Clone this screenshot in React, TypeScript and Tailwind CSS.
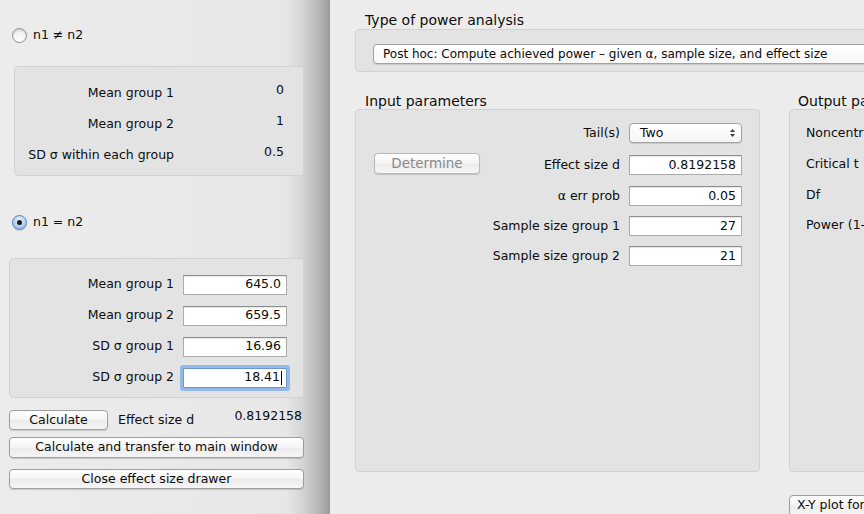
import React from 'react'

function Radio({ checked }: { checked?: boolean }) {
  if (checked) {
    return (
      <div className="w-[15px] h-[15px] rounded-full border border-[#5d82b4] bg-[radial-gradient(circle_at_50%_35%,#eef5fd_0%,#a9cbf0_60%,#77a7e0_100%)] shadow-[0_1px_1px_rgba(0,0,0,0.15)] flex items-center justify-center shrink-0">
        <div className="w-[5px] h-[5px] rounded-full bg-[#1c1c1c]" />
      </div>
    )
  }
  return (
    <div className="w-[15px] h-[15px] rounded-full border border-[#8e8e8e] bg-[linear-gradient(#ededed,#ffffff)] shadow-[inset_0_1px_2px_rgba(0,0,0,0.18)] shrink-0" />
  )
}

function Field({ value, focused }: { value: string; focused?: boolean }) {
  if (focused) {
    return (
      <div className="h-[20px] w-full bg-white border border-[#6d97cb] rounded-[1px] ring-[3px] ring-[#93b9e8] flex items-center justify-end pr-[4px]">
        <span>{value}</span>
        <span className="w-px h-[14px] bg-black ml-px" />
      </div>
    )
  }
  return (
    <div className="h-[20px] w-full bg-white border border-[#ababab] border-t-[#8d8d8d] shadow-[inset_0_1px_1px_rgba(0,0,0,0.1)] flex items-center justify-end pr-[5px]">
      {value}
    </div>
  )
}

function Button({ children, className, disabled }: { children: React.ReactNode; className?: string; disabled?: boolean }) {
  return (
    <div
      className={`rounded-[4px] border border-[#9e9e9e] bg-[linear-gradient(#ffffff,#f4f4f4_50%,#ebebeb_51%,#f6f6f6)] shadow-[0_1px_1px_rgba(0,0,0,0.15)] flex items-center justify-center shrink-0 ${disabled ? 'text-[#8a8a8a] border-[#b9b9b9]' : ''} ${className ?? ''}`}
    >
      {children}
    </div>
  )
}

function UpDown() {
  return (
    <svg width="7" height="10" viewBox="0 0 7 10" className="shrink-0">
      <path d="M3.5 1 L6 4 L1 4 Z" fill="#3a3a3a" />
      <path d="M3.5 9 L6 6 L1 6 Z" fill="#3a3a3a" />
    </svg>
  )
}

const sizeRows = [
  { label: 'Mean group 1', value: '645.0' },
  { label: 'Mean group 2', value: '659.5' },
  { label: 'SD σ group 1', value: '16.96' },
  { label: 'SD σ group 2', value: '18.41', focused: true },
]

const inputRows = [
  { label: 'Effect size d', value: '0.8192158', mt: 'mt-[12px]' },
  { label: 'α err prob', value: '0.05', mt: 'mt-[11px]' },
  { label: 'Sample size group 1', value: '27', mt: 'mt-[10px]' },
  { label: 'Sample size group 2', value: '21', mt: 'mt-[10px]' },
]

export default function App() {
  return (
    <div className="w-[864px] h-[514px] overflow-hidden flex bg-[#ececec] text-[#0c0c0c] font-['DejaVu_Sans',sans-serif] text-[12.5px] leading-none">
      {/* effect size drawer */}
      <div className="w-[330px] shrink-0 h-full flex flex-col bg-[linear-gradient(to_right,#ececec_0px,#e7e7e7_286px,#d4d4d4_303px,#b4b4b4_320px,#999999_330px)]">
        <div className="mt-[28px] ml-[12px] flex items-center gap-[6px] h-[15px]">
          <Radio />
          <span>n1 ≠ n2</span>
        </div>

        <div className="mt-[23px] ml-[14px] w-[290px] h-[110px] rounded-[4px] border border-[#d2d2d2] bg-[#e3e3e3] pt-[11px]">
          {[
            ['Mean group 1', '0'],
            ['Mean group 2', '1'],
            ['SD σ within each group', '0.5'],
          ].map(([label, value]) => (
            <div key={label} className="h-[31px] flex items-center">
              <div className="w-[159px] text-right whitespace-nowrap">{label}</div>
              <div className="w-[110px] text-right relative -top-[3px]">{value}</div>
            </div>
          ))}
        </div>

        <div className="mt-[39px] ml-[12px] flex items-center gap-[6px] h-[15px]">
          <Radio checked />
          <span>n1 = n2</span>
        </div>

        <div className="mt-[28px] ml-[9px] w-[295px] h-[140px] rounded-[4px] border border-[#d2d2d2] bg-[#e3e3e3] pt-[10px]">
          {sizeRows.map(row => (
            <div key={row.label} className="h-[31px] flex items-center">
              <div className="w-[164px] text-right whitespace-nowrap">{row.label}</div>
              <div className="ml-[9px] w-[104px]">
                <Field value={row.value} focused={row.focused} />
              </div>
            </div>
          ))}
        </div>

        <div className="mt-[12px] flex items-center h-[20px]">
          <Button className="ml-[9px] w-[99px] h-[20px]">Calculate</Button>
          <span className="ml-[10px]">Effect size d</span>
          <span className="flex-1 text-right mr-[28px] relative -top-[4px]">0.8192158</span>
        </div>

        <Button className="mt-[7px] ml-[9px] w-[295px] h-[21px]">Calculate and transfer to main window</Button>
        <Button className="mt-[11px] ml-[9px] w-[295px] h-[20px]">Close effect size drawer</Button>
      </div>

      {/* main window */}
      <div className="flex-1 h-full overflow-hidden flex flex-col">
        <div className="mt-[12px] ml-[35px] h-[16px] leading-[16px] text-[14px] whitespace-nowrap">Type of power analysis</div>
        <div className="mt-[1px] ml-[25px] w-[560px] h-[43px] shrink-0 rounded-[4px] border border-[#d2d2d2] bg-[#e3e3e3] pt-[14px] pl-[17px]">
          <div className="h-[20px] w-[540px] rounded-[4px] border border-[#a2a2a2] bg-[linear-gradient(#ffffff,#f7f7f7)] shadow-[0_1px_1px_rgba(0,0,0,0.12)] flex items-center pl-[9px] text-[12px] whitespace-nowrap">
            Post hoc: Compute achieved power – given α, sample size, and effect size
          </div>
        </div>

        <div className="mt-[21px] flex">
          <div className="ml-[25px] w-[405px] shrink-0 flex flex-col">
            <div className="pl-[10px] h-[16px] leading-[16px] text-[14px] whitespace-nowrap">Input parameters</div>
            <div className="h-[363px] rounded-[4px] border border-[#d2d2d2] bg-[#e3e3e3] pt-[13px]">
              <div className="flex items-center h-[20px]">
                <div className="w-[264px] text-right">Tail(s)</div>
                <div className="ml-[9px] w-[113px] h-[20px] rounded-[4px] border border-[#a2a2a2] bg-[linear-gradient(#ffffff,#f5f5f5)] shadow-[0_1px_1px_rgba(0,0,0,0.12)] flex items-center pl-[10px] pr-[5px]">
                  <span className="flex-1">Two</span>
                  <UpDown />
                </div>
              </div>
              {inputRows.map((row, i) => (
                <div key={row.label} className={`flex items-center h-[20px] ${row.mt}`}>
                  <div className="w-[264px] flex items-center">
                    {i === 0 && (
                      <Button disabled className="ml-[18px] w-[106px] h-[21px] -mt-[3px] text-[13.5px]">Determine</Button>
                    )}
                    <div className="flex-1 text-right whitespace-nowrap">{row.label}</div>
                  </div>
                  <div className="ml-[9px] w-[113px]">
                    <Field value={row.value} />
                  </div>
                </div>
              ))}
            </div>
          </div>

          <div className="ml-[29px] w-[220px] shrink-0 flex flex-col">
            <div className="pl-[9px] h-[16px] leading-[16px] text-[14px] whitespace-nowrap">Output parameters</div>
            <div className="h-[363px] rounded-[4px] border border-[#d2d2d2] bg-[#e3e3e3] pt-[13px] pl-[16px] whitespace-nowrap">
              <div className="h-[20px] flex items-center">Noncentrality parameter δ</div>
              <div className="h-[20px] flex items-center mt-[11px]">Critical t</div>
              <div className="h-[20px] flex items-center mt-[11px]">Df</div>
              <div className="h-[20px] flex items-center mt-[10px]">Power (1-β err prob)</div>
            </div>
            <Button className="mt-[23px] w-[180px] h-[21px] justify-start pl-[7px] whitespace-nowrap">X-Y plot for a range of values</Button>
          </div>
        </div>
      </div>
    </div>
  )
}
